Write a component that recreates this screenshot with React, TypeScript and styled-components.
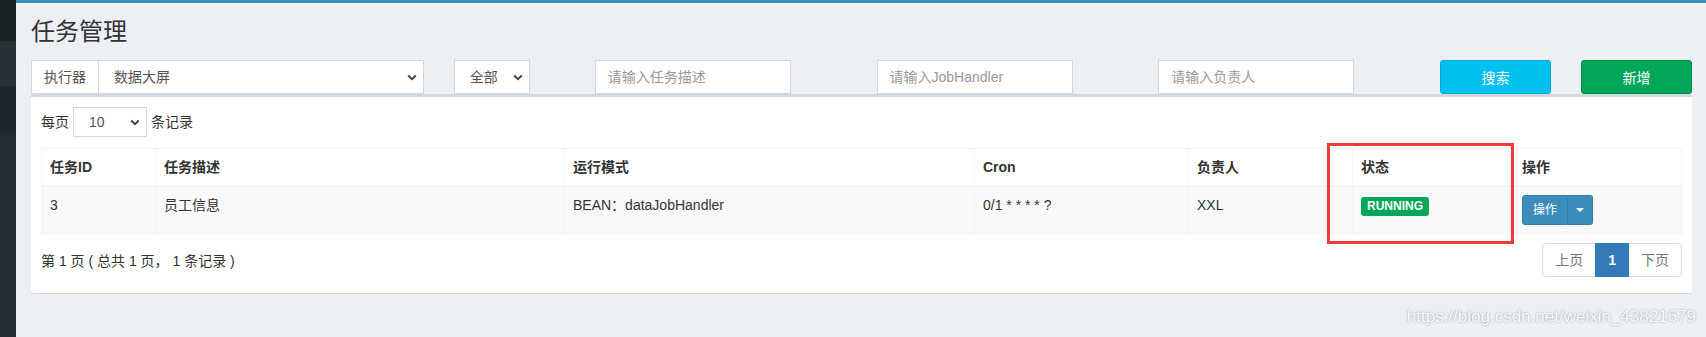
import styled, { createGlobalStyle } from "styled-components";

const GlobalStyle = createGlobalStyle`
  html, body {
    margin: 0;
    padding: 0;
  }
  body {
    font-family: "Liberation Sans", "Noto Sans CJK SC", sans-serif;
    font-size: 14px;
    line-height: 20px;
    color: #333;
    background: #ecf0f5;
  }
  * {
    box-sizing: border-box;
  }
`;

const Wrapper = styled.div`
  display: flex;
  height: 337px;
  position: relative;
  overflow: hidden;
`;

const Sidebar = styled.aside`
  width: 16px;
  flex-shrink: 0;
  background: #222d32;
  display: flex;
  flex-direction: column;
`;

const SideItem = styled.div<{ $h: number; $bg: string }>`
  height: ${(p) => p.$h}px;
  background: ${(p) => p.$bg};
`;

const Main = styled.div`
  flex: 1;
  background: #ecf0f5;
`;

const TopBar = styled.div`
  height: 3px;
  background: #3c8dbc;
`;

const ContentHeader = styled.section`
  padding: 15px 15px 0;
`;

const Title = styled.h1`
  margin: 0;
  font-size: 24px;
  line-height: 27px;
  font-weight: 400;
  color: #333;
`;

const Content = styled.section`
  padding: 15px;
`;

const FilterRow = styled.div`
  display: grid;
  grid-template-columns: repeat(12, 1fr);
  column-gap: 30px;
`;

const Col = styled.div<{ $span: number }>`
  grid-column: span ${(p) => p.$span};
  display: flex;
`;

const InputGroup = styled.div`
  display: flex;
  flex: 1;
  height: 34px;
`;

const Addon = styled.span`
  display: flex;
  align-items: center;
  padding: 0 12px;
  border: 1px solid #d2d6de;
  border-right: 0;
  background: #fff;
  color: #555;
`;

const Select = styled.div<{ $width?: number; $height?: number }>`
  display: flex;
  align-items: center;
  justify-content: space-between;
  ${(p) => (p.$width ? `width: ${p.$width}px;` : "flex: 1;")}
  height: ${(p) => p.$height ?? 34}px;
  padding: 0 6px 0 15px;
  border: 1px solid #d2d6de;
  background: #fff;
  color: #555;
`;

const Chevron = () => (
  <svg width="10" height="7" viewBox="0 0 10 7">
    <polyline points="1.2,1.5 5,5.2 8.8,1.5" fill="none" stroke="#444" strokeWidth="2" />
  </svg>
);

const TextInput = styled.input`
  width: 196px;
  height: 34px;
  padding: 6px 12px;
  border: 1px solid #d2d6de;
  background: #fff;
  font-family: inherit;
  font-size: 14px;
  color: #555;
  outline: none;
  &::placeholder {
    color: #999;
  }
`;

const Button = styled.button<{ $variant: "info" | "success" }>`
  flex: 1;
  height: 34px;
  border-radius: 3px;
  border: 1px solid ${(p) => (p.$variant === "info" ? "#00acd6" : "#008d4c")};
  background: ${(p) => (p.$variant === "info" ? "#00c0ef" : "#00a65a")};
  color: #fff;
  font-family: inherit;
  font-size: 14px;
`;

const Box = styled.div`
  background: #fff;
  border-top: 3px solid #d2d6de;
  border-radius: 3px;
  box-shadow: 0 1px 1px rgba(0, 0, 0, 0.1);
`;

const BoxBody = styled.div`
  padding: 10px;
`;

const LengthRow = styled.div`
  display: flex;
  align-items: center;
  gap: 4px;
  height: 30px;
`;

const Table = styled.table`
  width: 100%;
  margin-top: 11px;
  border-collapse: collapse;
  table-layout: fixed;
  border: 1px solid #f4f4f4;

  th,
  td {
    padding: 8px;
    border: 1px solid #f4f4f4;
    text-align: left;
    vertical-align: top;
    line-height: 20px;
    white-space: nowrap;
  }
  thead th {
    border-bottom-width: 2px;
    font-weight: 700;
  }
  tbody tr {
    background: #f9f9f9;
  }
`;

const Badge = styled.span`
  display: inline-block;
  margin-top: 2px;
  height: 19px;
  padding: 0 6px;
  line-height: 19px;
  border-radius: 3px;
  background: #00a65a;
  color: #fff;
  font-size: 12px;
  font-weight: 700;
  vertical-align: top;
`;

const BtnGroup = styled.div`
  display: inline-flex;
  height: 30px;
  vertical-align: top;
`;

const GroupPart = styled.span<{ $caret?: boolean }>`
  display: flex;
  align-items: center;
  justify-content: center;
  padding: ${(p) => (p.$caret ? "0 8px" : "0 10px")};
  background: #3c8dbc;
  border: 1px solid #367fa9;
  color: #fff;
  font-size: 12px;
  border-radius: ${(p) => (p.$caret ? "0 3px 3px 0" : "3px 0 0 3px")};
  ${(p) => (p.$caret ? "border-left: 0;" : "")}
`;

const Caret = styled.span`
  width: 0;
  height: 0;
  border-top: 4px solid #fff;
  border-left: 4px solid transparent;
  border-right: 4px solid transparent;
`;

const Footer = styled.div`
  display: flex;
  justify-content: space-between;
  align-items: flex-start;
  margin-top: 9px;
  margin-bottom: 6px;
`;

const Info = styled.div`
  padding-top: 8px;
`;

const Pager = styled.ul`
  display: flex;
  margin: 0;
  padding: 0;
  list-style: none;
`;

const PageItem = styled.li<{ $active?: boolean }>`
  padding: 6px 12px;
  line-height: 20px;
  margin-left: -1px;
  border: 1px solid ${(p) => (p.$active ? "#337ab7" : "#ddd")};
  background: ${(p) => (p.$active ? "#337ab7" : "#fff")};
  color: ${(p) => (p.$active ? "#fff" : "#777")};
  font-weight: ${(p) => (p.$active ? 700 : 400)};
  position: relative;
  z-index: ${(p) => (p.$active ? 2 : 1)};
  &:first-child {
    margin-left: 0;
    border-radius: 4px 0 0 4px;
  }
  &:last-child {
    border-radius: 0 4px 4px 0;
  }
`;

const Highlight = styled.div`
  position: absolute;
  left: 1327px;
  top: 143px;
  width: 187px;
  height: 101px;
  border: 3px solid #f23a3a;
  pointer-events: none;
`;

const Watermark = styled.div`
  position: absolute;
  right: 10px;
  top: 307px;
  font-family: "Liberation Sans", sans-serif;
  font-size: 17px;
  color: #fbfcfd;
  text-shadow: 0 0 2px rgba(0, 0, 0, 0.4);
`;

const columns = [
  { title: "任务ID", width: 114 },
  { title: "任务描述", width: 409 },
  { title: "运行模式", width: 410 },
  { title: "Cron", width: 214 },
  { title: "负责人", width: 164 },
  { title: "状态", width: 161 },
  { title: "操作", width: 168 },
];

function App() {
  return (
    <>
      <GlobalStyle />
      <Wrapper>
        <Sidebar>
          <SideItem $h={41} $bg="#1a2226" />
          <SideItem $h={45} $bg="#263238" />
          <SideItem $h={49} $bg="#1e282c" />
        </Sidebar>
        <Main>
          <TopBar />
          <ContentHeader>
            <Title>任务管理</Title>
          </ContentHeader>
          <Content>
            <FilterRow>
              <Col $span={3}>
                <InputGroup>
                  <Addon>执行器</Addon>
                  <Select>
                    数据大屏
                    <Chevron />
                  </Select>
                </InputGroup>
              </Col>
              <Col $span={1}>
                <Select $width={76}>
                  全部
                  <Chevron />
                </Select>
              </Col>
              <Col $span={2}>
                <TextInput placeholder="请输入任务描述" />
              </Col>
              <Col $span={2}>
                <TextInput placeholder="请输入JobHandler" />
              </Col>
              <Col $span={2}>
                <TextInput placeholder="请输入负责人" />
              </Col>
              <Col $span={1}>
                <Button $variant="info">搜索</Button>
              </Col>
              <Col $span={1}>
                <Button $variant="success">新增</Button>
              </Col>
            </FilterRow>
            <Box>
              <BoxBody>
                <LengthRow>
                  每页
                  <Select $width={74} $height={30}>
                    10
                    <Chevron />
                  </Select>
                  条记录
                </LengthRow>
                <Table>
                  <colgroup>
                    {columns.map((c) => (
                      <col key={c.title} style={{ width: c.width }} />
                    ))}
                  </colgroup>
                  <thead>
                    <tr>
                      {columns.map((c) => (
                        <th key={c.title}>{c.title}</th>
                      ))}
                    </tr>
                  </thead>
                  <tbody>
                    <tr>
                      <td>3</td>
                      <td>员工信息</td>
                      <td>BEAN：dataJobHandler</td>
                      <td>0/1 * * * * ?</td>
                      <td>XXL</td>
                      <td>
                        <Badge>RUNNING</Badge>
                      </td>
                      <td>
                        <BtnGroup>
                          <GroupPart>操作</GroupPart>
                          <GroupPart $caret>
                            <Caret />
                          </GroupPart>
                        </BtnGroup>
                      </td>
                    </tr>
                  </tbody>
                </Table>
                <Footer>
                  <Info>第 1 页 ( 总共 1 页， 1 条记录 )</Info>
                  <Pager>
                    <PageItem>上页</PageItem>
                    <PageItem $active>1</PageItem>
                    <PageItem>下页</PageItem>
                  </Pager>
                </Footer>
              </BoxBody>
            </Box>
          </Content>
        </Main>
        <Highlight />
        <Watermark>https://blog.csdn.net/weixin_43821679</Watermark>
      </Wrapper>
    </>
  );
}

export default App;
